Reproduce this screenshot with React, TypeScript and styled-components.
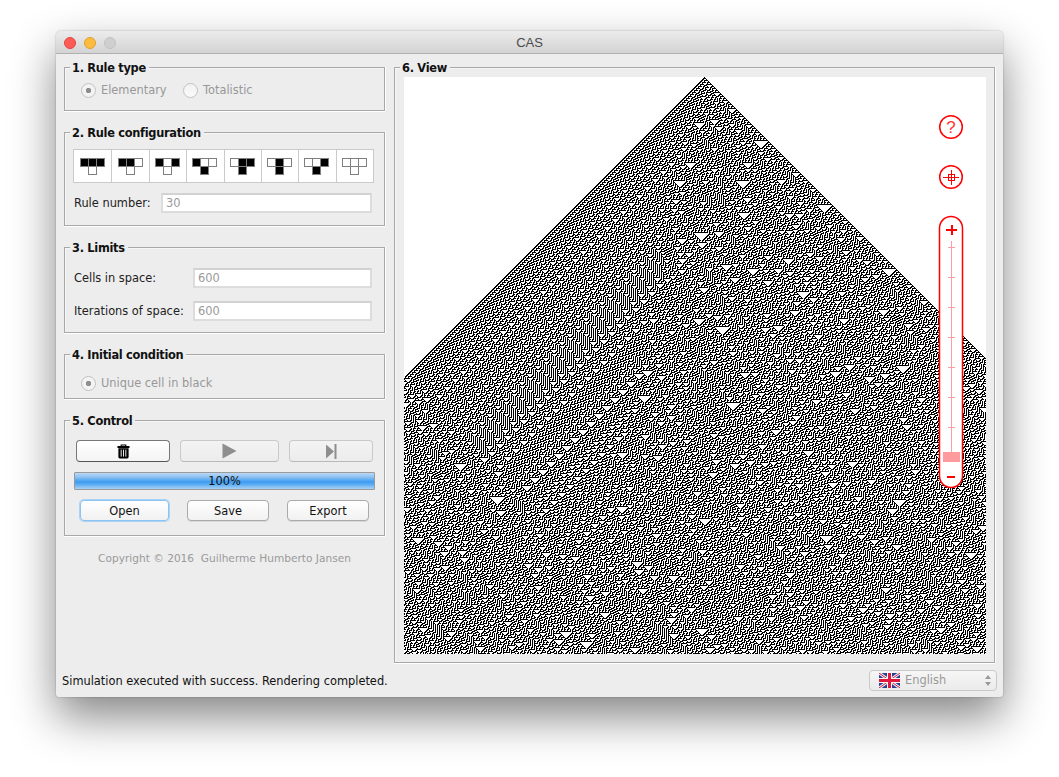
import React, { useMemo } from "react";
import styled, { createGlobalStyle } from "styled-components";

const Global = createGlobalStyle`
  html, body { margin: 0; padding: 0; background: #fff; }
  body { font-family: "DejaVu Sans", "Liberation Sans", sans-serif; font-size: 11.4px; height: 777px; overflow: hidden; }
`;

const Page = styled.div`
  padding: 31px 0 0 56px;
`;
const Win = styled.div`
  width: 947px;
  height: 666px;
  display: flex;
  flex-direction: column;
  background: #ededed;
  border-radius: 5px 5px 3px 3px;
  box-shadow: 0 20px 45px rgba(0, 0, 0, 0.48), 0 0 2px rgba(0, 0, 0, 0.3);
`;
const TitleBar = styled.div`
  position: relative;
  flex: none;
  height: 22px;
  display: flex;
  align-items: center;
  justify-content: center;
  border-bottom: 1px solid #b1b1b1;
  border-radius: 5px 5px 0 0;
  background: linear-gradient(#ececec, #d3d3d3);
`;
const Lights = styled.div`
  position: absolute;
  left: 8px;
  top: 6px;
  display: flex;
  gap: 8px;
`;
const Light = styled.span<{ $c: string; $b: string }>`
  width: 12px;
  height: 12px;
  box-sizing: border-box;
  border-radius: 50%;
  background: ${(p) => p.$c};
  border: 1px solid ${(p) => p.$b};
`;
const Title = styled.span`
  padding-top: 1px;
  font-family: "Liberation Sans", sans-serif;
  font-size: 13px;
  color: #4b4b4b;
`;
const Main = styled.div`
  flex: 1;
  min-height: 0;
  display: flex;
  gap: 9px;
  padding: 13px 9px 0 8px;
`;
const Left = styled.div`
  width: 321px;
  flex: none;
  display: flex;
  flex-direction: column;
  gap: 21px;
`;
const Group = styled.section<{ $h: number; $pad?: string }>`
  position: relative;
  box-sizing: border-box;
  height: ${(p) => p.$h}px;
  padding: ${(p) => p.$pad || "0"};
  border: 1px solid #a8a8a8;
  box-shadow: 0 1px 0 #fff, 1px 0 0 #fff, inset 1px 1px 0 #f6f6f6;
`;
const Legend = styled.h2`
  position: absolute;
  left: 5px;
  top: -7px;
  margin: 0;
  padding: 0 3px 0 2px;
  height: 14px;
  line-height: 14px;
  background: #ededed;
  font-size: 11.4px;
  font-weight: 700;
  letter-spacing: -0.3px;
  color: #111;
  white-space: nowrap;
`;
const RadioRow = styled.div`
  display: flex;
  align-items: center;
  height: 18px;
`;
const Radio = styled.span<{ $on?: boolean; $w: number }>`
  display: flex;
  align-items: center;
  width: ${(p) => p.$w}px;
  color: #989898;
  &::before {
    content: "";
    flex: none;
    box-sizing: border-box;
    width: 15px;
    height: 15px;
    margin-right: 5px;
    border-radius: 50%;
    border: 1px solid #c2c2c2;
    background: ${(p) =>
      p.$on
        ? "radial-gradient(circle, #8e8e8e 0 2.4px, #f3f3f3 3px)"
        : "linear-gradient(#f1f1f1, #fbfbfb)"};
  }
`;
const RuleTable = styled.div`
  display: grid;
  grid-template-columns: repeat(8, 1fr);
  width: 301px;
  height: 34px;
  box-sizing: border-box;
  border: 1px solid #cacaca;
  background: #fff;
`;
const RuleCell = styled.div`
  display: flex;
  align-items: center;
  justify-content: center;
  & + & {
    border-left: 1px solid #cacaca;
  }
`;
const FieldRow = styled.div`
  display: flex;
  align-items: center;
  justify-content: space-between;
  width: 298px;
  height: 20px;
  margin-left: 1px;
`;
const FieldLabel = styled.label`
  color: #222;
  white-space: nowrap;
`;
const Field = styled.div<{ $w: number }>`
  width: ${(p) => p.$w}px;
  height: 20px;
  box-sizing: border-box;
  border: 2px solid #dcdcdc;
  border-top-color: #d2d2d2;
  background: #fff;
  color: #999;
  line-height: 16px;
  padding-left: 3px;
`;
const Stack = styled.div<{ $gap: number }>`
  display: flex;
  flex-direction: column;
  gap: ${(p) => p.$gap}px;
`;
const BtnRow = styled.div<{ $gap: number; $pad: string; $h: number; $mt?: number }>`
  display: flex;
  gap: ${(p) => p.$gap}px;
  padding: ${(p) => p.$pad};
  height: ${(p) => p.$h}px;
  margin-top: ${(p) => p.$mt || 0}px;
`;
const IconBtn = styled.div<{ $w: number; $active?: boolean }>`
  width: ${(p) => p.$w}px;
  box-sizing: border-box;
  display: flex;
  align-items: center;
  justify-content: center;
  border-radius: 4px;
  border: 1px solid ${(p) => (p.$active ? "#777" : "#c9c9c9")};
  border-bottom-color: ${(p) => (p.$active ? "#555" : "#b9b9b9")};
  background: ${(p) => (p.$active ? "linear-gradient(#fff, #f4f4f4)" : "linear-gradient(#f3f3f3, #ececec)")};
`;
const TextBtn = styled.div<{ $w: number; $focus?: boolean }>`
  width: ${(p) => p.$w}px;
  box-sizing: border-box;
  display: flex;
  align-items: center;
  justify-content: center;
  border-radius: 4px;
  color: #111;
  border: 1px solid ${(p) => (p.$focus ? "#8ec2f1" : "#aaa")};
  background: linear-gradient(#fff, #f1f1f1);
  box-shadow: ${(p) => (p.$focus ? "0 0 0 1px #a9d3f7" : "0 1px 0 #d8d8d8")};
`;
const Progress = styled.div`
  width: 301px;
  height: 18px;
  box-sizing: border-box;
  margin: 10px 0 0 -1px;
  display: flex;
  align-items: center;
  justify-content: center;
  border: 1px solid #9a9a9a;
  border-radius: 1px;
  color: #111;
  background: linear-gradient(#b9d8f6 0%, #8fc2f3 25%, #3d9cf2 55%, #58aaf2 70%, #a9d2f5 100%);
`;
const Copyright = styled.div`
  margin-top: -5px;
  text-align: center;
  font-size: 10.6px;
  color: #9a9a9a;
  white-space: pre;
`;
const ViewGroup = styled(Group)`
  flex: 1;
  padding: 9px 8px 8px 9px;
`;
const ViewBox = styled.div`
  position: relative;
  width: 582px;
  height: 577px;
  background: #fff;
  overflow: hidden;
`;
const Automaton = styled.svg`
  display: block;
  shape-rendering: crispEdges;
`;
const Overlay = styled.svg`
  position: absolute;
  left: 534px;
  top: 36px;
`;
const Status = styled.div`
  flex: none;
  height: 34px;
  display: flex;
  align-items: center;
  justify-content: space-between;
  padding: 0 6px;
  color: #111;
`;
const StatusText = styled.span`
  padding-top: 1px;
`;
const Select = styled.div`
  position: relative;
  width: 128px;
  height: 21px;
  box-sizing: border-box;
  display: flex;
  align-items: center;
  gap: 5px;
  padding-left: 9px;
  border: 1px solid #c9c9c9;
  border-radius: 4px;
  background: linear-gradient(#f6f6f6, #ebebeb);
  color: #999;
`;
const Spinner = styled.svg`
  position: absolute;
  right: 5px;
  top: 4px;
`;

function ruleRows(rule: number, size: number, rows: number): string {
  let cur = new Uint8Array(size);
  cur[size >> 1] = 1;
  const parts: string[] = [];
  for (let y = 0; y < rows; y++) {
    let x = 0;
    while (x < size) {
      if (cur[x]) {
        const s = x;
        while (x < size && cur[x]) x++;
        parts.push(`M${s} ${y}h${x - s}v1h${s - x}z`);
      } else x++;
    }
    const next = new Uint8Array(size);
    for (let i = 0; i < size; i++) {
      const v = (cur[(i + size - 1) % size] << 2) | (cur[i] << 1) | cur[(i + 1) % size];
      next[i] = (rule >> v) & 1;
    }
    cur = next;
  }
  return parts.join("");
}

const RuleIcon: React.FC<{ code: number }> = ({ code }) => {
  const bits = [(code >> 2) & 1, (code >> 1) & 1, code & 1];
  const out = (30 >> code) & 1;
  return (
    <svg width="26" height="18" viewBox="0 -1 26 18" shapeRendering="crispEdges">
      {bits.map((b, i) => (
        <rect key={i} x={0.5 + i * 8} y={0.5} width={8} height={8} fill={b ? "#000" : "#fff"} stroke="#7f7f7f" />
      ))}
      <rect x={8.5} y={8.5} width={8} height={8} fill={out ? "#000" : "#fff"} stroke="#7f7f7f" />
    </svg>
  );
};

const Flag = () => (
  <svg width="21" height="15" viewBox="0 0 21 15">
    <rect width="21" height="15" rx="1" fill="#2a3f8f" />
    <path d="M0 0L21 15M21 0L0 15" stroke="#e8eef6" strokeWidth="3" />
    <path d="M0 0L21 15M21 0L0 15" stroke="#d8203c" strokeWidth="1" />
    <path d="M10.5 0V15M0 7.5H21" stroke="#f2f4f8" strokeWidth="5" />
    <path d="M10.5 0V15M0 7.5H21" stroke="#e0183a" strokeWidth="3" />
  </svg>
);

const Trash = () => (
  <svg width="13" height="15" viewBox="0 0 14 16">
    <path d="M4.5 2.5V1h5v1.5" fill="none" stroke="#000" strokeWidth="1.2" />
    <rect x="0.5" y="2" width="13" height="2.2" rx="0.6" fill="#000" />
    <path d="M1.5 4.5h11V14a1.5 1.5 0 0 1-1.5 1.5H3A1.5 1.5 0 0 1 1.5 14z" fill="#000" />
    <path d="M4.5 6v7.5M7 6v7.5M9.5 6v7.5" stroke="#fff" strokeWidth="1" />
  </svg>
);

const Play = () => (
  <svg width="15" height="16" viewBox="0 0 15 16">
    <path d="M0.5 0.5L14.5 8L0.5 15.5z" fill="#8e8e8e" />
  </svg>
);
const Step = () => (
  <svg width="11" height="15" viewBox="0 0 11 15">
    <path d="M0 0.5L8 7.5L0 14.5z" fill="#8e8e8e" />
    <rect x="8.5" y="0" width="2" height="15" fill="#8e8e8e" />
  </svg>
);

const Controls = () => {
  const ticks = [134, 164, 194, 224, 254, 284, 314];
  return (
    <Overlay width="26" height="378" viewBox="0 0 26 378">
      <g fill="#fff" stroke="#ff0000" strokeWidth="1.5">
        <circle cx="13" cy="14" r="11.3" />
        <circle cx="13" cy="64" r="11.3" />
        <path d="M1.5 115a11.5 11.5 0 0 1 23 0V363a11.5 11.5 0 0 1-23 0z" />
      </g>
      <text x="13" y="20" textAnchor="middle" fontFamily="Liberation Sans, sans-serif" fontSize="17" fill="#f33">?</text>
      <g fill="#f00" shapeRendering="crispEdges">
        <rect x="5" y="64" width="16" height="1" />
        <rect x="13" y="57" width="1" height="15" />
        <rect x="8" y="116" width="11" height="2" />
        <rect x="13" y="112" width="2" height="10" />
        <rect x="9" y="363" width="8" height="2" />
      </g>
      <rect x="10.5" y="61.5" width="6" height="6" fill="none" stroke="#f00" strokeWidth="1" shapeRendering="crispEdges" />
      <g stroke="#ff9ea2" strokeWidth="1" shapeRendering="crispEdges">
        <path d="M13.5 128V340" />
        <path d={ticks.map((t) => `M10 ${t}.5H17`).join("")} />
      </g>
      <rect x="5" y="339" width="17" height="10" fill="#ff9a9f" />
    </Overlay>
  );
};

export default function App() {
  const d = useMemo(() => ruleRows(30, 600, 577), []);
  return (
    <Page>
      <Global />
      <Win>
        <TitleBar>
          <Lights>
            <Light $c="#fc5b57" $b="#e2463f" />
            <Light $c="#fdbb40" $b="#e0a32c" />
            <Light $c="#cfcfcf" $b="#c2c2c2" />
          </Lights>
          <Title>CAS</Title>
        </TitleBar>
        <Main>
          <Left>
            <Group $h={44} $pad="13px 0 0 16px">
              <Legend>1. Rule type</Legend>
              <RadioRow>
                <Radio $on $w={102}>Elementary</Radio>
                <Radio $w={100}>Totalistic</Radio>
              </RadioRow>
            </Group>
            <Group $h={94} $pad="16px 0 0 8px">
              <Legend>2. Rule configuration</Legend>
              <Stack $gap={10}>
                <RuleTable>
                  {[7, 6, 5, 4, 3, 2, 1, 0].map((c) => (
                    <RuleCell key={c}>
                      <RuleIcon code={c} />
                    </RuleCell>
                  ))}
                </RuleTable>
                <FieldRow>
                  <FieldLabel>Rule number:</FieldLabel>
                  <Field $w={211}>30</Field>
                </FieldRow>
              </Stack>
            </Group>
            <Group $h={86} $pad="20px 0 0 8px">
              <Legend>3. Limits</Legend>
              <Stack $gap={13}>
                <FieldRow>
                  <FieldLabel>Cells in space:</FieldLabel>
                  <Field $w={179}>600</Field>
                </FieldRow>
                <FieldRow>
                  <FieldLabel>Iterations of space:</FieldLabel>
                  <Field $w={179}>600</Field>
                </FieldRow>
              </Stack>
            </Group>
            <Group $h={45} $pad="19px 0 0 16px">
              <Legend>4. Initial condition</Legend>
              <RadioRow>
                <Radio $on $w={200}>Unique cell in black</Radio>
              </RadioRow>
            </Group>
            <Group $h={116} $pad="19px 0 0 10px">
              <Legend>5. Control</Legend>
              <BtnRow $gap={10} $pad="0 0 0 1px" $h={22}>
                <IconBtn $w={94} $active>
                  <Trash />
                </IconBtn>
                <IconBtn $w={99}>
                  <Play />
                </IconBtn>
                <IconBtn $w={84}>
                  <Step />
                </IconBtn>
              </BtnRow>
              <Progress>100%</Progress>
              <BtnRow $gap={18} $pad="0 0 0 5px" $h={21} $mt={10}>
                <TextBtn $w={89} $focus>Open</TextBtn>
                <TextBtn $w={82}>Save</TextBtn>
                <TextBtn $w={82}>Export</TextBtn>
              </BtnRow>
            </Group>
            <Copyright>{"Copyright © 2016  Guilherme Humberto Jansen"}</Copyright>
          </Left>
          <ViewGroup $h={596}>
            <Legend>6. View</Legend>
            <ViewBox>
              <Automaton width="582" height="577" viewBox="0 0 582 577">
                <path d={d} fill="#000" />
              </Automaton>
              <Controls />
            </ViewBox>
          </ViewGroup>
        </Main>
        <Status>
          <StatusText>Simulation executed with success. Rendering completed.</StatusText>
          <Select>
            <Flag />
            English
            <Spinner width="6" height="11" viewBox="0 0 6 11">
              <path d="M3 0L6 4H0zM3 11L0 7H6z" fill="#999" />
            </Spinner>
          </Select>
        </Status>
      </Win>
    </Page>
  );
}
